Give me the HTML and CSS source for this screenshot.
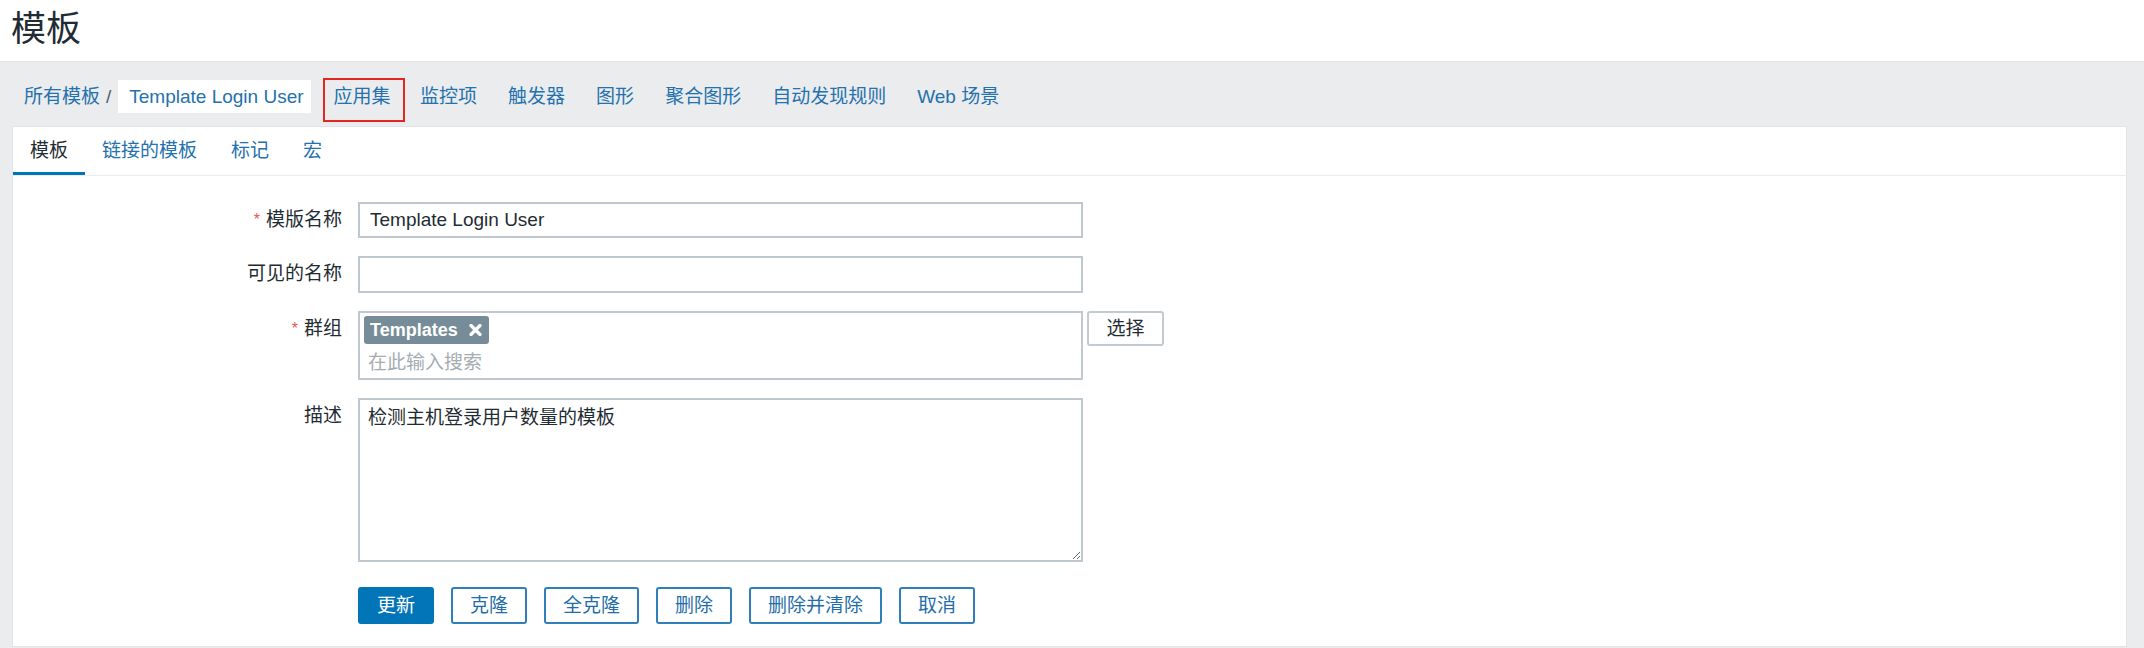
FILE: index.html
```html
<!DOCTYPE html>
<html lang="zh-CN">
<head>
<meta charset="utf-8">
<title>模板</title>
<link rel="stylesheet" href="styles.css">
</head>
<body>
<header class="page-header">
  <h1 class="page-title">模板</h1>
</header>
<nav class="object-nav">
  <ul class="breadcrumbs">
    <li class="crumb"><a class="link" href="#">所有模板</a></li>
    <li class="crumb-sep">/</li>
    <li class="crumb-current"><a class="link" href="#">Template Login User</a></li>
  </ul>
  <ul class="nav-items">
    <li class="nav-item is-marked"><a class="link" href="#">应用集</a></li>
    <li class="nav-item"><a class="link" href="#">监控项</a></li>
    <li class="nav-item"><a class="link" href="#">触发器</a></li>
    <li class="nav-item"><a class="link" href="#">图形</a></li>
    <li class="nav-item"><a class="link" href="#">聚合图形</a></li>
    <li class="nav-item"><a class="link" href="#">自动发现规则</a></li>
    <li class="nav-item"><a class="link" href="#">Web 场景</a></li>
  </ul>
</nav>
<main class="panel">
  <ul class="tabs">
    <li class="tab is-active">模板</li>
    <li class="tab">链接的模板</li>
    <li class="tab">标记</li>
    <li class="tab">宏</li>
  </ul>
  <form class="form-grid">
    <label class="form-label"><span class="req">*</span>模版名称</label>
    <div class="form-field"><input class="text-input" type="text" value="Template Login User"></div>

    <label class="form-label">可见的名称</label>
    <div class="form-field"><input class="text-input input-tall" type="text" value=""></div>

    <label class="form-label"><span class="req">*</span>群组</label>
    <div class="form-field field-row">
      <div class="multiselect">
        <span class="ms-tag">Templates<svg class="ms-remove" width="13" height="12" viewBox="0 0 13 12"><path d="M2 1.5 L11 10.5 M11 1.5 L2 10.5" stroke="#ffffff" stroke-width="3.2" stroke-linecap="round" fill="none"/></svg></span>
        <input class="ms-search" type="text" placeholder="在此输入搜索">
      </div>
      <button class="btn-grey" type="button">选择</button>
    </div>

    <label class="form-label">描述</label>
    <div class="form-field"><textarea class="text-area">检测主机登录用户数量的模板</textarea></div>

    <div class="form-actions">
      <button class="btn-primary" type="button">更新</button>
      <button class="btn-alt" type="button">克隆</button>
      <button class="btn-alt" type="button">全克隆</button>
      <button class="btn-alt" type="button">删除</button>
      <button class="btn-alt" type="button">删除并清除</button>
      <button class="btn-alt" type="button">取消</button>
    </div>
  </form>
</main>
</body>
</html>
```

FILE: styles.css
```css
* { box-sizing: border-box; }

html, body {
  margin: 0;
  padding: 0;
}

body {
  background: #eaecee;
  color: #1f2c33;
  font-family: "Liberation Sans", "Noto Sans CJK SC", sans-serif;
  font-size: 19px;
  line-height: 24px;
  overflow: hidden;
}

ul {
  list-style: none;
  margin: 0;
  padding: 0;
}

.link {
  color: #2471ad;
  text-decoration: none;
}

/* Header */
.page-header {
  height: 62px;
  background: #ffffff;
  border-bottom: 1px solid #dfe3e6;
  padding: 11px 0 0 11px;
}

.page-title {
  margin: 0;
  font-size: 35px;
  line-height: 35px;
  font-weight: normal;
  color: #1f2c33;
}

/* Object navigation */
.object-nav {
  display: flex;
  align-items: flex-start;
  height: 64px;
  padding: 18px 0 0 24px;
  line-height: 33px;
}

.breadcrumbs,
.nav-items {
  display: flex;
}

.crumb-sep {
  margin: 0 7px 0 6px;
  color: #4f5f68;
}

.crumb-current {
  background: #ffffff;
  padding: 0 7px 0 11px;
}

.nav-item {
  padding: 0 15.5px;
}

.nav-item.is-marked {
  position: relative;
  margin-left: 12px;
  padding: 0 14px 0 11px;
}

.nav-item.is-marked::after {
  content: "";
  position: absolute;
  left: 0;
  right: 0;
  top: -2px;
  bottom: -9px;
  border: 2px solid #e3261f;
  pointer-events: none;
}

/* Panel */
.panel {
  margin: 0 17px 0 12px;
  background: #ffffff;
  border: 1px solid #dfe4e7;
  padding-bottom: 22px;
}

.tabs {
  display: flex;
  border-bottom: 1px solid #ebeef0;
}

.tab {
  padding: 3px 17px 0;
  line-height: 42px;
  border-bottom: 3px solid transparent;
  color: #2471ad;
}

.tab.is-active {
  color: #1f2c33;
  border-bottom-color: #0275b8;
}

/* Form */
.form-grid {
  display: grid;
  grid-template-columns: 329px 725px;
  column-gap: 16px;
  row-gap: 18px;
  padding-top: 26px;
  margin: 0;
}

.form-label {
  text-align: right;
  line-height: 36px;
  color: #1f2c33;
  white-space: nowrap;
}

.req {
  color: #e45959;
  margin-right: 6px;
  font-size: 16px;
  vertical-align: 1px;
}

.form-field {
  display: flex;
}

.field-row {
  gap: 4px;
  width: 810px;
}

.text-input {
  width: 725px;
  height: 36px;
  border: 2px solid #bfc8ce;
  padding: 0 10px;
  font: inherit;
  color: #1f2c33;
  background: #ffffff;
  outline: none;
}

.input-tall {
  height: 37px;
}

.multiselect {
  width: 725px;
  height: 69px;
  flex: none;
  border: 2px solid #bfc8ce;
  padding: 3px 4px 0;
  display: flex;
  flex-direction: column;
  align-items: flex-start;
}

.ms-tag {
  display: inline-flex;
  align-items: center;
  height: 28px;
  padding: 0 7px 0 6px;
  background: #768d99;
  border-radius: 3px;
  color: #ffffff;
  font-weight: bold;
  font-size: 18px;
  line-height: 28px;
}

.ms-remove {
  margin-left: 11px;
}

.ms-search {
  margin-top: 4px;
  width: 100%;
  height: 30px;
  border: none;
  padding: 0 4px;
  font: inherit;
  color: #1f2c33;
  outline: none;
  background: transparent;
}

.ms-search::placeholder {
  color: #a3adb3;
}

.text-area {
  width: 725px;
  height: 164px;
  border: 2px solid #bfc8ce;
  padding: 6px 8px;
  font: inherit;
  line-height: 24px;
  color: #1f2c33;
  resize: both;
  outline: none;
}

/* Buttons */
.form-actions {
  grid-column: 2;
  display: flex;
  gap: 17px;
  margin-top: 7px;
}

.btn-primary,
.btn-alt,
.btn-grey {
  font: inherit;
  height: 37px;
  line-height: 33px;
  padding: 0 17px;
  border-radius: 3px;
  border: 2px solid #0275b8;
  cursor: pointer;
}

.btn-primary {
  background: #0275b8;
  color: #ffffff;
}

.btn-alt {
  background: #ffffff;
  color: #1f6ea9;
  border-color: #2f7fb9;
}

.btn-grey {
  height: 35px;
  line-height: 31px;
  padding: 0 17.5px;
  background: #ffffff;
  color: #1f2c33;
  border-color: #c3cbd0;
}
```
